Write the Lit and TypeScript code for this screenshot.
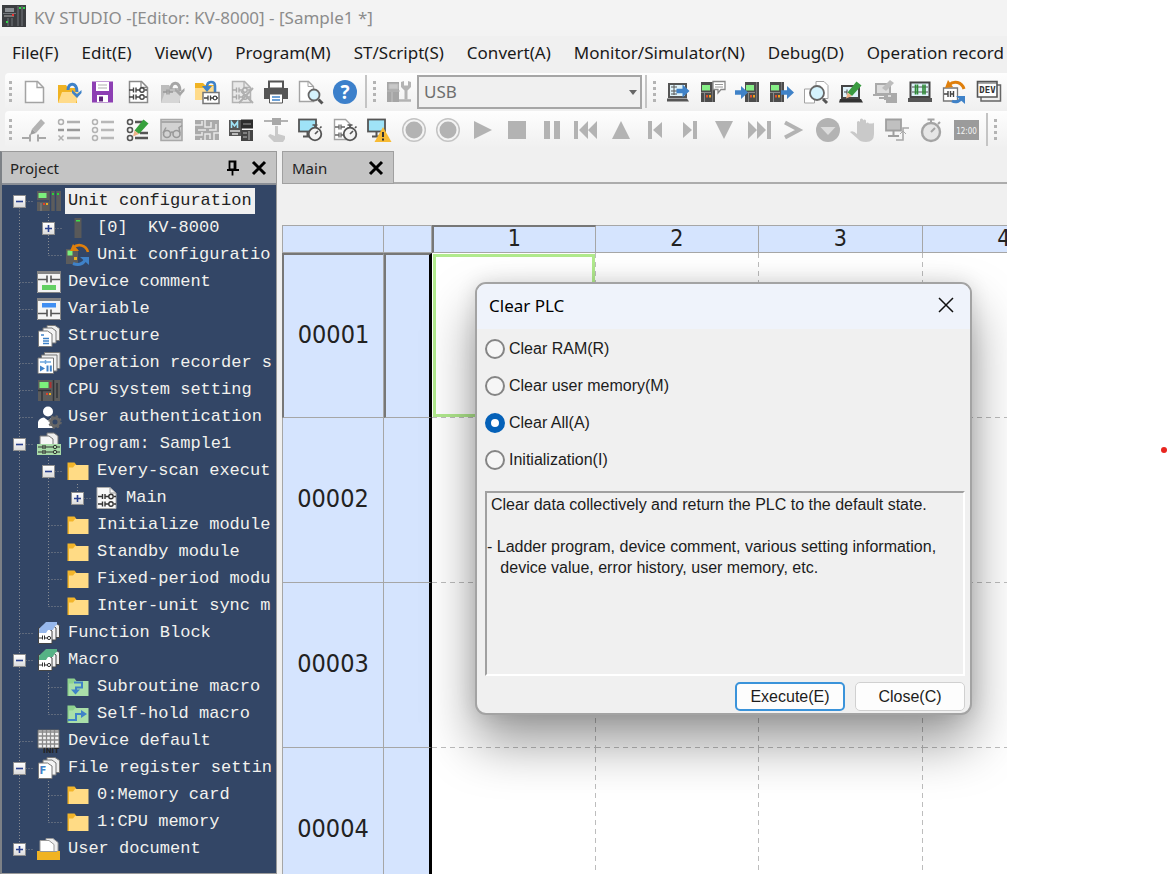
import { LitElement, html, svg, css, nothing } from "lit";
import { customElement, property, state } from "lit/decorators.js";
import { classMap } from "lit/directives/class-map.js";

/* ---------- shared drawing parts ---------- */

const rungs = (x: number, y: number, c: string) => svg`
  <path d="M${x} ${y}h4m3 0h4m5 0h2M${x + 4.5} ${y - 2.5}v5M${x + 7} ${y - 2.5}v5" fill="none" stroke=${c} stroke-width="1.4"/>
  <circle cx=${x + 13} cy=${y} r="2.2" fill="none" stroke=${c} stroke-width="1.4"/>`;
const sheet = (c: string, fill = "#fff") => svg`
  <path d="M3.5 1.5h12l6 6v15h-18z" fill=${fill} stroke=${c} stroke-width="1.5"/>
  <path d="M15 1.5v6h6" fill="none" stroke=${c} stroke-width="1.3"/>`;
const plc = (x: number) => svg`
  <rect x=${x} y="2" width="14" height="20" fill="#4c4c4c"/>
  <rect x=${x + 1} y="5" width="8" height="5.5" fill="#86ee86"/>
  <path d="M${x + 11.5} 2v20" stroke="#777"/>
  <path d="M${x} 12.5h10M${x + 3.5} 13v9" stroke="#8a8a8a"/>
  <path d="M${x + 5} 15h2v2.5h-2z" fill="#e0502a"/>
  <path d="M${x + 8} 15h2v2.5h-2z" fill="#f0a020"/>`;
const arrow = (x: number, y: number) => svg`
  <path d="M${x} ${y - 2.2}h6v-4.3l7 6.5l-7 6.5v-4.3h-6z" fill="#3f82c8"/>`;
const watch = (x: number, y: number) => svg`
  <circle cx=${x} cy=${y} r="6.3" fill="#f4f4f4" stroke="#555" stroke-width="1.8"/>
  <path d="M${x - 2.5} ${y - 9}h5M${x} ${y - 9}v2.5M${x + 5} ${y - 6}l1.5-1.5M${x} ${y}l3-3" fill="none" stroke="#555" stroke-width="1.7"/>`;
const lens = (x: number, y: number, r: number) => svg`
  <circle cx=${x} cy=${y} r=${r} fill="#d5f3fd" stroke="#666" stroke-width="1.8"/>
  <path d="M${x + r - 1} ${y + r - 1}l4 4" stroke="#555" stroke-width="3"/>`;
const monitor = svg`
  <rect x="1" y="1.5" width="17" height="12" fill="#9fe3f7" stroke="#555" stroke-width="1.8"/>
  <path d="M9.500 14v4M5 18.500h9" stroke="#555" stroke-width="2"/>`;
const pencil = (c: string, tip: string) => svg`
  <path d="M8.500 12.500l9-11l5 4l-9.500 10.500z" fill=${c}/>
  <path d="M8.500 12.500l-1.500 6l6-2.500z" fill=${tip}/>`;
const folder = (back: string, front: string) => svg`
  <path d="M1.500 21V3.500h7l2 2.500H22v15z" fill=${back}/>
  <path d="M3 21V8.500h4l2-2.500H22.500v15z" fill=${front}/>`;
const stack = (c = "#777") => svg`
  <path d="M10 1.500h8l4.500 3v12h-12.500z" fill="#eee" stroke=${c}/>
  <path d="M6 4h9l4 3v12h-13z" fill="#f4f4f4" stroke=${c}/>
  <path d="M1.500 7h9l4.500 3v12.500h-13.500z" fill="#fff" stroke=${c}/>`;
const G = "#b3b3b3";

const icons: Record<string, unknown> = {
  app: svg`<rect width="24" height="22" fill="#3b3d40"/><path d="M3 3h9v4H3z" fill="#8b8f93"/><path d="M1 8.500h13M16 1v20M20 1v20M6 13v8M10 13v8" stroke="#74787c"/><path d="M2 10h10v2H2z" fill="#777"/><path d="M10 9h2v2h-2z" fill="#e33"/><path d="M17 2h2v2h-2zM21 2h2v2h-2zM4 16h2v2H4z" fill="#35d64a"/>`,
  doc: sheet("#a3a3a3"),
  open: svg`<path d="M1 23V5h8l2 3h9v15z" fill="#f0b323"/><path d="M1 23l4-11h17l-3 11z" fill="#ffdb8a"/><path d="M11 10c0-8 9-8 9 2" fill="none" stroke="#3f82c8" stroke-width="3"/><path d="M15 10l5 4l4.500-4v3l-4.500 5l-5-5z" fill="#3f82c8"/>`,
  save: svg`<path d="M1 1.500h21v21H1z" fill="#8d3fb3"/><path d="M5 2h13v9H5z" fill="#fff"/><path d="M7 5h9M7 8h9" stroke="#c9c9c9" stroke-width="1.300"/><path d="M6 15h11v7H6z" fill="#fff"/><path d="M8 16.500h4v5H8z" fill="#5d2379"/>`,
  ladder: svg`${sheet("#8a8a8a")}${rungs(3, 10, "#444")}${rungs(3, 17, "#444")}`,
  openGrey: svg`<path d="M1 23V5h8l2 3h9v15z" fill="#bdbdbd"/><path d="M1 23l4-11h17l-3 11z" fill="#d6d6d6"/><path d="M11 9c0-8 9-8 9 2" fill="none" stroke="#a6a6a6" stroke-width="3"/><path d="M15 8l5 4l4.500-4v3l-4.500 5l-5-5z" fill="#a6a6a6"/><path d="M3 12h4m2 0h4M7 9.500v5M9 9.500v5" stroke="#999" stroke-width="1.400"/>`,
  openLadder: svg`<path d="M0 20V3h8l2 2h10v15z" fill="#f0b323"/><path d="M0 20V8h9l2-2h10v14z" fill="#ffdb8a"/><path d="M20 12V6q0-4-4-4q-4 0-4 5" fill="none" stroke="#3f82c8" stroke-width="2.600"/><path d="M7 6h10l-5 6z" fill="#3f82c8"/><path d="M8 12.500h16v11H8z" fill="#fff" stroke="#777" stroke-width="1.500"/><path d="M9 18h4m2 0h3M13 15.500v5M15.500 15.500v5M22 18h1" stroke="#444" stroke-width="1.300"/><circle cx="20" cy="18" r="1.800" fill="none" stroke="#444" stroke-width="1.200"/>`,
  ladderX: svg`${sheet(G, "#e9e9e9")}${rungs(3, 10, "#aaa")}${rungs(3, 17, "#aaa")}<path d="M12 11l12 12M24 8L10 23" stroke="#b0b0b0" stroke-width="2"/>`,
  print: svg`<path d="M5 1.500h14v7H5z" fill="#fff" stroke="#555" stroke-width="2"/><path d="M0 8h24v11H0z" fill="#555"/><path d="M5.500 14h13v9h-13z" fill="#fff" stroke="#555"/><path d="M8 17h8M8 20h8" stroke="#3f82c8" stroke-width="1.600"/>`,
  preview: svg`<path d="M1.500 1.500h9l5 5v15h-14z" fill="#fff" stroke="#a3a3a3" stroke-width="1.400"/><path d="M10 1.500v5h5" fill="none" stroke="#a3a3a3"/>${lens(16, 15, 5.5)}`,
  help: svg`<circle cx="12" cy="12" r="12" fill="#3c80cb"/><text x="12" y="18.500" text-anchor="middle" font-family="Open Sans, sans-serif" font-weight="700" font-size="19" fill="#fff">?</text>`,
  connect: svg`<path d="M0 2h12v20H0z" fill="#a6a6a6"/><path d="M2 4h9v5H2zM0 11h13" fill="#c8c8c8" stroke="#bbb"/><path d="M5 12v10" stroke="#c4c4c4"/><path d="M12 20.500h12" stroke=${G} stroke-width="2.500"/><path d="M14 2v5l3.500 3.500v9h3v-9L24 7V2l-3-1v4.500h-4V1z" fill=${G}/>`,
  pcOut: svg`<path d="M3 4h17v13H3z" fill="#dff3fa" stroke="#555" stroke-width="2"/><path d="M1 18.500h20l2 3H1z" fill="#555"/><path d="M5 7h6M5 11h6M5 14h6M8 5v10" stroke="#555"/>${arrow(10.5, 11)}`,
  plcNote: svg`${plc(0)}<path d="M12 1.500h12v8h-4l-3 3.500v-3.500h-5z" fill="#fff" stroke="#888" stroke-width="1.300"/><path d="M14 4.500h8M14 7h8" stroke="#999"/>`,
  plcIn: svg`${plc(10)}${arrow(0, 12.5)}`,
  plcOut: svg`${plc(0)}${arrow(11, 12.5)}`,
  docFind: svg`<path d="M12 1.500h8l4 4v13H12z" fill="#fff" stroke="#a3a3a3"/><path d="M.500 9h10v14H.500z" fill="#fff" stroke="#a3a3a3"/>${lens(13, 13, 7)}`,
  pcEdit: svg`<path d="M3 6h17v12H3z" fill="#dff3fa" stroke="#444" stroke-width="2"/><path d="M1 19h21l2 3.500H0z" fill="#333"/><path d="M5 12h3M8 9.500v5" stroke="#444"/>${pencil("#3a9b40", "#eeb388")}`,
  pcEditGrey: svg`<path d="M3 4h14v10H3z" fill="#ddd" stroke="#aaa" stroke-width="2"/><path d="M0 15h12v5M6 18h8" fill="none" stroke="#aaa" stroke-width="2"/><path d="M13 13h11v10H13z" fill="#aaa"/><path d="M15 15h3v2h-3z" fill="#ddd"/><path d="M9 8l8-8l4 3l-8 8z" fill="#bdbdbd"/>`,
  pcMonitor: svg`<path d="M2.500 2.500h19v14.500h-19z" fill="#dff3fa" stroke="#444" stroke-width="2"/><path d="M0 18h24v4H0z" fill="#555"/><path d="M4 7h16M4 12h16" stroke="#555"/><path d="M7.500 4.500v5M9.500 4.500v5M15 4.500v5M17 4.500v5M7.500 9.500v5M9.500 9.500v5M15 9.500v5M17 9.500v5" stroke="#2c8a35" stroke-width="1.600"/>`,
  swap: svg`<path d="M1.500 8h14v13h-14z" fill="#fff" stroke="#777" stroke-width="1.300"/><path d="M2 14h4m2.500 0h3M6 11v6M8.500 11v6M11.500 11v6" stroke="#444" stroke-width="1.400"/><path d="M7 5c5-5 13-3 15 4" fill="none" stroke="#df7f0c" stroke-width="3"/><path d="M3 8l3-8l5 7z" fill="#df7f0c"/><path d="M10 21c4 2 9 0 10-4" fill="none" stroke="#3f82c8" stroke-width="3"/><path d="M14 16h9v8z" fill="#3f82c8"/>`,
  dev: svg`<path d="M4 5h19.500v16H4z" fill="#eee" stroke="#666" stroke-width="1.500"/><path d="M.500 1.500H20v15.500H.500z" fill="#fff" stroke="#555" stroke-width="1.600"/><path d="M.500 3H20" stroke="#555"/><text x="10.500" y="13" text-anchor="middle" font-family="DejaVu Sans Mono, monospace" font-weight="700" font-size="9" fill="#333">DEV</text>`,
  edit: svg`<path d="M0 20h8M16 20h8M8 16.500v7M16 16.500v7" stroke="#a8a8a8" stroke-width="2"/><path d="M10 11l9-10l4 4l-9 10z" fill=${G}/><path d="M10 11l-2 6l6-2z" fill="#9d9d9d"/>`,
  listX: svg`<path d="M10 4h13M10 20h13" stroke="#b0b0b0" stroke-width="2.600"/><path d="M1 12h6M10 12h13" stroke="#999" stroke-width="2.600"/><circle cx="4" cy="4" r="2.500" fill="none" stroke="#b0b0b0" stroke-width="1.500"/><path d="M1.500 17.500l5 5M6.500 17.500l-5 5" stroke="#b0b0b0" stroke-width="1.500"/>`,
  list: svg`<path d="M10 4h13M10 12h13M10 20h13" stroke="#b8b8b8" stroke-width="2.400"/><circle cx="4" cy="4" r="2.500" fill="none" stroke=${G} stroke-width="1.500"/><circle cx="4" cy="12" r="2.500" fill="none" stroke=${G} stroke-width="1.500"/><circle cx="4" cy="20" r="2.500" fill="none" stroke=${G} stroke-width="1.500"/>`,
  listEdit: svg`<path d="M9 4h8M14 15h8M9 20h13" stroke="#555" stroke-width="2.400"/><circle cx="4" cy="4" r="2.500" fill="none" stroke="#555" stroke-width="1.600"/><circle cx="4" cy="12" r="2.500" fill="none" stroke="#555" stroke-width="1.600"/><circle cx="4" cy="20" r="2.500" fill="none" stroke="#555" stroke-width="1.600"/>${pencil("#36a03c", "#eeb388")}`,
  glasses: svg`<path d="M1 1.500h21v21H1z" fill="#d2d2d2" stroke="#a8a8a8" stroke-width="1.600"/><path d="M1 4h21" stroke="#a8a8a8" stroke-width="2"/><path d="M3 15L6 9.500M20 15l-1-5.500l3-2M10.500 15q1.500-2 3 0" fill="none" stroke="#999" stroke-width="1.500"/><circle cx="7" cy="16" r="3.500" fill="none" stroke="#999" stroke-width="1.600"/><circle cx="16.500" cy="16" r="3.500" fill="none" stroke="#999" stroke-width="1.600"/>`,
  blocks: svg`<path d="M0 2h24v20H0z" fill="#aaa"/><path d="M0 7h7V3M10 2v7h6V4M3 12h8M14 12h7V6M0 17h7v-3M10 22v-6h5v5M19 22v-7h5M6 22v-2" fill="none" stroke="#e8e8e8" stroke-width="1.500"/>`,
  memory: svg`<path d="M0 2h13v16H0z" fill="#555"/><path d="M2.500 10V4l3 4l3-4v6" fill="none" stroke="#9fe3f7" stroke-width="1.600"/><path d="M1 13h10M3 16h6" stroke="#ddd" stroke-width="1.300"/><path d="M12 1.500h12v9H12z" fill="#2c2c2c"/><path d="M14 6h8" stroke="#999"/><path d="M12 12h12v11H12z" fill="#444"/><path d="M14 15h4M20 13v9M14 19h4" stroke="#bbb"/>`,
  touch: svg`<path d="M0 3h24" stroke=${G} stroke-width="2"/><path d="M8 0h9v7H8z" fill="#a8a8a8"/><path d="M11 8h3v8l7 2v3l-2 3h-9l-6-6l2-2l5 2z" fill="#c9c9c9"/>`,
  pcWatch: svg`${monitor}${watch(17, 16)}`,
  ladderWatch: svg`<path d="M1.500 1.500h11l5 5v15h-16z" fill="#fff" stroke="#a3a3a3" stroke-width="1.400"/><path d="M2 9h4m2 0h4M6 6.500v5M8 6.500v5M2 17h4m2 0h4M6 14.500v5M8 14.500v5" stroke="#666" stroke-width="1.300"/>${watch(17, 16)}`,
  pcWarn: svg`${monitor}<path d="M16 9l8.500 15H7.500z" fill="#f8bb33"/><path d="M16 14v5M16 20.500v2" stroke="#333" stroke-width="2"/>`,
  rec: svg`<circle cx="12" cy="12" r="11.300" fill="#f4f4f4" stroke="#c4c4c4" stroke-width="1.500"/><circle cx="12" cy="12" r="8.500" fill=${G}/>`,
  play: svg`<path d="M3 3l18 9l-18 9z" fill=${G}/>`,
  stop: svg`<path d="M3 3h18v18H3z" fill=${G}/>`,
  pause: svg`<path d="M4 3h6v18H4zM14 3h6v18h-6z" fill=${G}/>`,
  first: svg`<path d="M0 3h4v18H0zM14 3v18L5 12zM23 3v18l-9-9z" fill=${G}/>`,
  up: svg`<path d="M12 3l9 18H3z" fill=${G}/>`,
  prev: svg`<path d="M5 3h4v18H5zM19 4v16l-9-8z" fill=${G}/>`,
  next: svg`<path d="M15 3h4v18h-4zM5 4v16l9-8z" fill=${G}/>`,
  down: svg`<path d="M12 21l9-18H3z" fill=${G}/>`,
  last: svg`<path d="M20 3h4v18h-4zM1 3v18l9-9zM10 3v18l9-9z" fill=${G}/>`,
  step: svg`<path d="M4 4.500L18 12L4 19.500" fill="none" stroke=${G} stroke-width="4"/>`,
  drop: svg`<circle cx="12" cy="12" r="12" fill=${G}/><path d="M4.500 9h15L12 17z" fill="#dcdcdc"/>`,
  hand: svg`<path d="M0 14q3-2 7 2V4q1.500-2 3 0v8V1.500q1.500-2 3 0V12V2.500q1.500-2 3 0V12.500V5.500q1.500-2 3 0h3.500q1.500-2 1.500 1V16q0 8-8 8q-6 0-8-3z" fill="#c9c9c9"/>`,
  pcLink: svg`<path d="M1 1.500h15v11H1z" fill="#c0c0c0" stroke="#9f9f9f" stroke-width="1.800"/><path d="M8.500 13v4M3 18h11" stroke="#9f9f9f" stroke-width="2"/><path d="M11 22h7V10h6" fill="none" stroke="#a8a8a8" stroke-width="1.600"/><path d="M15 16l3-3l3 3" fill="none" stroke="#a8a8a8"/>`,
  timer: svg`<circle cx="12" cy="14" r="9" fill="#e6e6e6" stroke="#a4a4a4" stroke-width="2.400"/><path d="M8.500 1.500h7M12 1v4M19 6l2-2M12 14l4-4" stroke="#a4a4a4" stroke-width="2"/>`,
  clock: svg`<path d="M0 2h25v20H0z" fill="#9b9b9b"/><text x="12.500" y="16" text-anchor="middle" font-family="DejaVu Sans Condensed, DejaVu Sans, sans-serif" font-size="8" fill="#f4f4f4">12:00</text>`,

  unit: svg`<path d="M0 2h24v20H0z" fill="#5c5c5c"/><path d="M1.500 4h8v5h-8z" fill="#7cf07c"/><path d="M13.500 2v20M18.500 2v20M0 12h12" stroke="#334666" stroke-width="1.500"/><path d="M15 4h2v2h-2zM20 4h2v2h-2z" fill="#27d43a"/><path d="M6 14h2v2H6z" fill="#e0402a"/><path d="M9 14h2v2H9z" fill="#e8b020"/><path d="M4 14v8" stroke="#888"/>`,
  module: svg`<path d="M8.500 2h7v20h-7z" fill="#595959"/><path d="M10 4h4v1.500h-4z" fill="#3de24b"/>`,
  unitSwap: svg`<path d="M0 6h12v15H0z" fill="#5c5c5c"/><path d="M1.500 7.500h5v5h-5z" fill="#7cf07c"/><path d="M8 14h3v3H8z" fill="#e8b020"/><path d="M7 5c5-5 13-3 15 4" fill="none" stroke="#df7f0c" stroke-width="2.600"/><path d="M4 8l3-7l6 7z" fill="#df7f0c"/><path d="M7 20.500c5 2 9 1 12-3" fill="none" stroke="#3f82c8" stroke-width="3"/><path d="M14 14h9v8z" fill="#3f82c8"/>`,
  devComment: svg`<path d="M0 1h24v22H0z" fill="#f4f4f4"/><path d="M0 1h24v3H0z" fill="#858585"/><path d="M.500 1v21.500h23V1" fill="none" stroke="#858585"/><path d="M1 9.500h9M14 9.500h9M10 5.500v7M14 5.500v7" stroke="#555" stroke-width="1.600"/><path d="M5 15h14v5H5z" fill="#63d063"/>`,
  variable: svg`<path d="M0 1h24v22H0z" fill="#f4f4f4"/><path d="M0 1h24v3H0z" fill="#858585"/><path d="M.500 1v21.500h23V1" fill="none" stroke="#858585"/><path d="M1 16.500h9M14 16.500h9M10 12.500v7M14 12.500v7" stroke="#555" stroke-width="1.600"/><path d="M5 6h14v4.500H5z" fill="#3f8ef2"/>`,
  structure: svg`${stack()}<path d="M4 11h3" stroke="#3f82c8" stroke-width="1.500"/><path d="M6 14.500h6M6 17h6M6 19.500h6" stroke="#3f82c8" stroke-width="1.300"/>`,
  recorder: svg`<path d="M7.500 1.500h15.500v16H7.500z" fill="#e8e8e8" stroke="#777"/><path d="M4.500 4h15.500v16H4.500z" fill="#f0f0f0" stroke="#777"/><path d="M1 7h15.500v15.500H1z" fill="#fff" stroke="#777"/><path d="M3 11h11M8.500 9v4" stroke="#6da6dd" stroke-width="1.500"/><path d="M3 14.500l5 3l-5 3zM9.500 14.500h2v6h-2zM12.800 14.500h2v6h-2z" fill="#3f82c8"/>`,
  cpu: svg`<path d="M1 2h22v21H1z" fill="#5c5c5c"/><path d="M2.500 4h9v6h-9z" fill="#7cf07c"/><path d="M12.500 4h2v6h-2z" fill="#a33"/><path d="M16.500 2v21M20 5v15M1 12.500h13M5 13v10" stroke="#2f3338" stroke-width="1.500"/><path d="M9 15h2v2H9z" fill="#e0402a"/><path d="M12 15h2v2h-2z" fill="#e8b020"/>`,
  user: svg`<circle cx="11" cy="6.500" r="5" fill="#fff"/><path d="M1 23v-6q1-4 6-4.500l4 3l4-3l2 1v9.500z" fill="#fff"/><circle cx="18" cy="17" r="4" fill="#334666" stroke="#666" stroke-width="3"/><circle cx="18" cy="17" r="6" fill="none" stroke="#666" stroke-width="1.500" stroke-dasharray="2.400 2.300"/>`,
  program: svg`<path d="M10 1h7l4 3v10H10z" fill="#eee" stroke="#777"/><path d="M3 4h9l4 3v8H3z" fill="#f6f6f6" stroke="#777"/><path d="M0 12h24v11H0z" fill="#a8dba8"/><path d="M1 15h5m2 0h8M20 15h3M6 13v4M8 13v4M1 20h5m2 0h8M20 20h3M6 18v4M8 18v4" stroke="#333" stroke-width="1.200"/><circle cx="18" cy="15" r="1.700" fill="none" stroke="#333"/><circle cx="18" cy="20" r="1.700" fill="none" stroke="#333"/>`,
  folder: folder("#f3b52a", "#ffdb85"),
  main: svg`<path d="M2 1.500h13l6 5.500v15.500H2z" fill="#f8f8f8" stroke="#aaa"/><path d="M15 1.500v5.500h6" fill="none" stroke="#999"/>${rungs(3, 10.5, "#333")}${rungs(3, 18, "#333")}`,
  funcBlock: svg`${stack("#444")}<path d="M2 9q0-2 5-6l2-2h11v3q-2 0-4 5H11l-2 3H2z" fill="#97b8ec"/><path d="M2 17h3m2 0h3M5.500 14.500v4M7.500 14.500v4" stroke="#333"/><circle cx="12" cy="17" r="1.600" fill="none" stroke="#333"/>`,
  macro: svg`${stack("#444")}<path d="M2 9q0-2 5-6l2-2h11v3q-2 0-4 5H11l-2 3H2z" fill="#56b285"/><path d="M2 17h3m2 0h3M5.500 14.500v4M7.500 14.500v4" stroke="#333"/><circle cx="12" cy="17" r="1.600" fill="none" stroke="#333"/>`,
  subroutine: svg`${folder("#8fd28f", "#a9dfa9")}<path d="M8 7.500h8v5h-6v5" fill="none" stroke="#3f82c8" stroke-width="2"/><path d="M5 14.500h9l-4.500 5z" fill="#3f82c8"/>`,
  selfHold: svg`${folder("#8fd28f", "#a9dfa9")}<path d="M2 18h8v-6h6" fill="none" stroke="#3f82c8" stroke-width="2"/><path d="M15 8l6 4l-6 4z" fill="#3f82c8"/>`,
  devDefault: svg`<path d="M1 1h21v18H1z" fill="#f2f2f2" stroke="#666"/><path d="M1 3h21M1 7h21M1 11h21M1 15h21M5.500 1v18M9.500 1v18M13.500 1v18M17.500 1v18" stroke="#8a8a8a" stroke-width="1.300"/><text x="14" y="23.500" text-anchor="middle" font-family="DejaVu Sans, sans-serif" font-weight="700" font-size="7" fill="#222">INIT</text>`,
  fileReg: svg`${stack()}<text x="6" y="17.500" text-anchor="middle" font-family="DejaVu Sans, sans-serif" font-weight="700" font-size="10" fill="#3f82c8">F</text>`,
  userDoc: svg`<path d="M9 1.500h7l5 4v9H9z" fill="#eee" stroke="#999"/><path d="M3 3.500h9l5 4v7H3z" fill="#fff" stroke="#999"/><path d="M0 14h3v1h17v-1h3v9H0z" fill="#f0b323"/>`,
};

@customElement("kv-icon")
class KvIcon extends LitElement {
  @property() name = "";
  static styles = css`
    :host { display: block; width: 24px; height: 24px; flex: none; }
    .glyph { display: block; width: 24px; height: 24px; overflow: visible; }
  `;
  render() {
    return html`<svg class="glyph" viewBox="0 0 24 24" aria-hidden="true">${icons[this.name] ?? nothing}</svg>`;
  }
}

/* ---------- project tree ---------- */

type Row = { guides: string; icon: string; label: string; open?: boolean; selected?: boolean };
/* One letter for each guide column: i = straight line, t = branch, e = last branch, s = first branch. */
const rows: Row[] = [
  { guides: "s", icon: "unit", label: "Unit configuration", open: true, selected: true },
  { guides: "it", icon: "module", label: "[0]  KV-8000", open: false },
  { guides: "ie", icon: "unitSwap", label: "Unit configuratio" },
  { guides: "t", icon: "devComment", label: "Device comment" },
  { guides: "t", icon: "variable", label: "Variable" },
  { guides: "t", icon: "structure", label: "Structure" },
  { guides: "t", icon: "recorder", label: "Operation recorder s" },
  { guides: "t", icon: "cpu", label: "CPU system setting" },
  { guides: "t", icon: "user", label: "User authentication" },
  { guides: "t", icon: "program", label: "Program: Sample1", open: true },
  { guides: "it", icon: "folder", label: "Every-scan execut", open: true },
  { guides: "iie", icon: "main", label: "Main", open: false },
  { guides: "it", icon: "folder", label: "Initialize module" },
  { guides: "it", icon: "folder", label: "Standby module" },
  { guides: "it", icon: "folder", label: "Fixed-period modu" },
  { guides: "ie", icon: "folder", label: "Inter-unit sync m" },
  { guides: "t", icon: "funcBlock", label: "Function Block" },
  { guides: "t", icon: "macro", label: "Macro", open: true },
  { guides: "it", icon: "subroutine", label: "Subroutine macro" },
  { guides: "ie", icon: "selfHold", label: "Self-hold macro" },
  { guides: "t", icon: "devDefault", label: "Device default" },
  { guides: "t", icon: "fileReg", label: "File register settin", open: true },
  { guides: "it", icon: "folder", label: "0:Memory card" },
  { guides: "ie", icon: "folder", label: "1:CPU memory" },
  { guides: "e", icon: "userDoc", label: "User document", open: false },
];
const guidePaths: Record<string, string> = {
  i: "M14.5 0v27",
  t: "M14.5 0v27M14.5 14.5h15",
  e: "M14.5 0v14.5M14.5 14.5h15",
  s: "M14.5 14.5v13M14.5 14.5h15",
};

@customElement("kv-project")
class KvProject extends LitElement {
  static styles = css`
    :host { display: flex; flex-direction: column; min-height: 0; border: 1px solid #9a9a9a; border-left: 2px solid #7d8186; box-sizing: border-box; overflow: hidden; background: #334666; }
    .head { display: flex; align-items: center; height: 33px; flex: none; box-sizing: border-box; padding: 0 8px; background: #c4c4c4; border-bottom: 2px solid #8b8f96; font: 15px "Noto Sans", sans-serif; color: #222; }
    .title { margin: 0; font: inherit; flex: 1; }
    .tool { border: 0; background: none; padding: 0; width: 18px; height: 18px; margin-left: 8px; }
    .tree { list-style: none; margin: 0; padding: 2px 0 0 3px; }
    .row { display: flex; height: 27px; align-items: center; }
    .cell { display: grid; width: 29px; height: 27px; flex: none; place-items: center; }
    .cell > * { grid-area: 1 / 1; }
    .guide { width: 29px; height: 27px; fill: none; stroke: #8a8d93; stroke-width: 1; stroke-dasharray: 1 2; }
    .box { width: 13px; height: 13px; padding: 0; margin-top: 2px; border: 1px solid #8f8f8f; background: linear-gradient(#fff, #dcdcdc); display: grid; place-items: center; }
    .label { white-space: pre; margin-left: 2px; padding: 0 3px; height: 26px; line-height: 26px; color: #f2f2ee; font-family: "Liberation Mono", "Courier New", monospace; font-size: 17px; }
    .selected { background: #f0f0f0; color: #222; }
  `;
  render() {
    return html`
      <header class="head">
        <h2 class="title">Project</h2>
        <button class="tool" aria-label="Auto hide"><svg width="18" height="18" viewBox="0 0 18 18"><path d="M5.500 2.500h6v8h-6zM10.500 2.500v8M3 11h12M8.500 11v5.500" fill="none" stroke="#000" stroke-width="1.800"/></svg></button>
        <button class="tool" aria-label="Close panel"><svg width="18" height="18" viewBox="0 0 18 18"><path d="M3 3l12 12M15 3L3 15" stroke="#000" stroke-width="3"/></svg></button>
      </header>
      <ul class="tree">
        ${rows.map((r) => html`<li class="row">
          ${[...r.guides].map((g, i) => html`<span class="cell">
            <svg class="guide" viewBox="0 0 29 27" aria-hidden="true"><path d=${guidePaths[g]}/></svg>
            ${i === r.guides.length - 1 && r.open !== undefined
              ? html`<button class="box" aria-label=${r.open ? "Collapse" : "Expand"}><svg width="11" height="11" viewBox="0 0 11 11"><path d=${r.open ? "M2 5.5h7" : "M2 5.5h7M5.5 2v7"} stroke="#2b4290" stroke-width="1.6"/></svg></button>`
              : nothing}
          </span>`)}
          <span class="cell"><kv-icon name=${r.icon}></kv-icon></span>
          <span class=${classMap({ label: true, selected: !!r.selected })}>${r.label}</span>
        </li>`)}
      </ul>`;
  }
}

/* ---------- ladder editor ---------- */

@customElement("kv-ladder")
class KvLadder extends LitElement {
  static styles = css`
    :host { display: flex; flex-direction: column; min-width: 0; min-height: 0; overflow: hidden; }
    .tabs { display: flex; height: 33px; flex: none; }
    .tab { width: 112px; box-sizing: border-box; border: 1px solid #a0a0a0; background: #c4c4c4; display: flex; align-items: center; justify-content: space-between; padding: 0 8px 0 9px; font: 15px "Noto Sans", sans-serif; color: #222; }
    .close { border: 0; padding: 0; background: none; width: 18px; height: 18px; }
    .rest { flex: 1; border-bottom: 2px solid #acacac; }
    .canvas { margin-top: 41px; flex: 1; min-height: 0; overflow: hidden; background: #fff; }
    .grid { table-layout: fixed; border-collapse: separate; border-spacing: 0; width: 804px; font-family: "DejaVu Sans Condensed", "DejaVu Sans", sans-serif; color: #222; }
    .c-no { width: 102px; } .c-rail { width: 48px; }
    .grid th { box-sizing: border-box; padding: 0 0 4px; font-weight: 400; background: #d5e4fe; border: 0 solid #a6a6a6; border-width: 0 1px 1px 0; }
    .grid thead th { height: 28px; padding: 0 0 3px; border-top-width: 1px; font-size: 23px; line-height: 22px; }
    .grid th:first-child { border-left-width: 1px; }
    .grid thead th.current { border-top: 2px solid #777; border-left: 2px solid #777; }
    .grid tbody th { height: 165px; font-size: 25px; }
    .grid tbody th.rail { border-right: 3px solid #000; }
    .grid tbody th.current { border-top: 2px solid #777; border-left: 2px solid #777; }
    .slot { padding: 0; background:
      repeating-linear-gradient(90deg, #bdbdbd 0 5px, transparent 5px 9px) bottom / 100% 1px no-repeat,
      repeating-linear-gradient(#bdbdbd 0 5px, transparent 5px 9px) right / 1px 100% no-repeat; }
    .active { outline: 3px solid #b1ea8d; outline-offset: -4px; }
  `;
  render() {
    const cols = [1, 2, 3, 4];
    return html`
      <div class="tabs">
        <div class="tab"><span>Main</span><button class="close" aria-label="Close Main"><svg width="18" height="18" viewBox="0 0 18 18"><path d="M3 3l12 12M15 3L3 15" stroke="#000" stroke-width="3"/></svg></button></div>
        <div class="rest"></div>
      </div>
      <div class="canvas">
        <table class="grid">
          <colgroup><col class="c-no"><col class="c-rail">${cols.map(() => html`<col>`)}</colgroup>
          <thead><tr><th></th><th></th>${cols.map((c) => html`<th scope="col" class=${c === 1 ? "current" : ""}>${c}</th>`)}</tr></thead>
          <tbody>
            ${[1, 2, 3, 4].map((r) => html`<tr>
              <th scope="row" class=${r === 1 ? "current" : ""}>${String(r).padStart(5, "0")}</th>
              <th class=${classMap({ rail: true, current: r === 1 })}></th>
              ${cols.map((c) => html`<td class=${classMap({ slot: true, active: r === 1 && c === 1 })}></td>`)}
            </tr>`)}
          </tbody>
        </table>
      </div>`;
  }
}

/* ---------- clear dialog ---------- */

@customElement("kv-clear-dialog")
class KvClearDialog extends LitElement {
  @state() private choice = "A";
  static styles = css`
    :host { display: block; box-sizing: border-box; border: 2px solid #a3a3a3; border-radius: 11px; overflow: hidden; background: #f0f0f0; color: #1c1c1c; font: 16px "Liberation Sans", Arial, sans-serif; box-shadow: 0 28px 52px rgba(0, 0, 0, .4), 0 0 20px rgba(0, 0, 0, .12); }
    .bar { display: flex; align-items: center; justify-content: space-between; height: 45px; box-sizing: border-box; padding: 0 15px 3px 12px; background: #eff3fb; color: #000; }
    .title { margin: 0; font: 17px "Noto Sans", sans-serif; }
    .x { width: 18px; height: 18px; border: 0; padding: 0; background: none; }
    .choices { border: 0; margin: 0; padding: 1px 8px 0; }
    .choice { display: flex; align-items: center; gap: 4px; height: 37px; }
    .radio { appearance: none; width: 20px; height: 20px; margin: 0; box-sizing: border-box; border: 2px solid #858585; border-radius: 50%; background: #f6f6f6; }
    .radio:checked { border: 6px solid #0561b8; background: #fff; }
    .note { margin: 13px 5px 0 8px; height: 185px; box-sizing: border-box; border: 2px solid #fff; border-top-color: #a0a0a0; border-left-color: #a0a0a0; line-height: 21px; padding-top: 1px; }
    .line { margin: 0; padding-left: 4px; min-height: 21px; white-space: pre; }
    .item { padding-left: 0; }
    .actions { display: flex; justify-content: flex-end; gap: 10px; padding: 6px 5px 2px; }
    .btn { width: 110px; height: 29px; box-sizing: border-box; border: 1px solid #d0d0d0; border-radius: 5px; background: #fdfdfd; padding: 0; font: inherit; color: inherit; }
    .default { border: 2px solid #3a93da; }
  `;
  render() {
    const opts = [["R", "Clear RAM(R)"], ["M", "Clear user memory(M)"], ["A", "Clear All(A)"], ["I", "Initialization(I)"]];
    return html`
      <header class="bar">
        <h1 class="title">Clear PLC</h1>
        <button class="x" aria-label="Close"><svg width="18" height="18" viewBox="0 0 18 18"><path d="M2 2l14 14M16 2L2 16" stroke="#111" stroke-width="1.500"/></svg></button>
      </header>
      <fieldset class="choices" aria-label="Clear PLC">
        ${opts.map(([v, t]) => html`<label class="choice"><input class="radio" type="radio" name="clear" .value=${v} ?checked=${this.choice === v} @change=${() => (this.choice = v)}><span>${t}</span></label>`)}
      </fieldset>
      <div class="note">
        <p class="line">Clear data collectively and return the PLC to the default state.</p>
        <p class="line"></p>
        <p class="line item">- Ladder program, device comment, various setting information,</p>
        <p class="line item">   device value, error history, user memory, etc.</p>
      </div>
      <footer class="actions"><button class="btn default">Execute(E)</button><button class="btn">Close(C)</button></footer>`;
  }
}

/* ---------- application ---------- */

const menus = ["File(F)", "Edit(E)", "View(V)", "Program(M)", "ST/Script(S)", "Convert(A)", "Monitor/Simulator(N)", "Debug(D)", "Operation record"];
const fileTools = ["doc", "open", "save", "ladder", "openGrey", "openLadder", "ladderX", "print", "preview", "help"];
const plcTools = ["pcOut", "plcNote", "plcIn", "plcOut", "docFind", "pcEdit", "pcEditGrey", "pcMonitor", "swap", "dev"];
const runTools = ["edit", "listX", "list", "listEdit", "glasses", "blocks", "memory", "touch", "pcWatch", "ladderWatch", "pcWarn", "rec", "rec", "play", "stop", "pause", "first", "up", "prev", "next", "down", "last", "step", "drop", "hand", "pcLink", "timer", "clock"];

@customElement("app-root")
class AppRoot extends LitElement {
  static styles = css`
    :host { display: grid; grid-template-columns: minmax(0, 1fr) 161px; height: 100vh; background: #fff; overflow: hidden; }
    .window { position: relative; display: flex; flex-direction: column; min-width: 0; min-height: 0; overflow: hidden; background: #f0f0f0; }
    .titlebar { display: flex; align-items: center; gap: 8px; height: 36px; box-sizing: border-box; flex: none; padding: 0 0 2px 2px; background: #f3f3f3; color: #8c8c8c; font: 17px "Noto Sans", sans-serif; }
    .menu { display: flex; align-items: center; gap: 23px; height: 37px; box-sizing: border-box; flex: none; padding: 0 0 4px 12px; font: 17px "Noto Sans", sans-serif; white-space: nowrap; overflow: hidden; }
    .menu-item { border: 0; background: none; padding: 0; font: inherit; color: #1a1a1a; flex: none; }
    .bar { display: flex; align-items: center; height: 37px; flex: none; margin-left: 5px; background: linear-gradient(#fefefe, #f0f0f0); border-radius: 4px 0 0 4px; margin-bottom: 1px; }
    .grip { width: 3px; height: 22px; flex: none; margin: 0 5px 0 4px; background: repeating-linear-gradient(#b4b4b4 0 3px, transparent 3px 6px); }
    .tools { display: grid; grid-auto-flow: column; grid-auto-columns: 1fr; flex: none; justify-items: center; }
    .ten { width: 345px; } .run { width: 966px; } .one { width: 36px; }
    .tool { border: 0; background: none; padding: 0; }
    .sep { width: 2px; height: 33px; background: #c4c4c4; flex: none; margin: 0 2px 0 3px; }
    .pick { position: relative; width: 225px; height: 34px; flex: none; }
    .select { appearance: none; width: 100%; height: 100%; box-sizing: border-box; border: 2px solid #a6a6a6; border-radius: 0; background: #f0f0f0; color: #6e6e6e; opacity: 1; padding: 0 5px; font: 17px "Noto Sans", sans-serif; }
    .caret { position: absolute; right: 5px; top: 15px; border: 4px solid transparent; border-top: 5px solid #666; border-bottom: 0; }
    .work { display: grid; grid-template-columns: 277px minmax(0, 1fr); gap: 5px; flex: 1; min-height: 0; margin-top: 2px; }
    .dialog { position: absolute; left: 475px; top: 282px; width: 497px; }
    .side { display: flex; justify-content: flex-end; padding: 447px 1px 0 0; }
    .dot { width: 6px; height: 6px; border-radius: 50%; background: #e8251f; }
  `;
  private group(names: string[], cls: string) {
    return html`<div class="tools ${cls}">${names.map((n) => html`<button class="tool" aria-label=${n}><kv-icon name=${n}></kv-icon></button>`)}</div>`;
  }
  render() {
    return html`
      <main class="window">
        <header class="titlebar"><kv-icon name="app"></kv-icon><span>KV STUDIO -[Editor: KV-8000] - [Sample1 *]</span></header>
        <nav class="menu">${menus.map((m) => html`<button class="menu-item">${m}</button>`)}</nav>
        <div class="bar">
          <span class="grip"></span>${this.group(fileTools, "ten")}
          <span class="sep"></span><span class="grip"></span>${this.group(["connect"], "one")}
          <div class="pick"><select class="select" aria-label="Connection"><option>USB</option></select><span class="caret"></span></div>
          <span class="sep"></span><span class="grip"></span>${this.group(plcTools, "ten")}
        </div>
        <div class="bar">
          <span class="grip"></span>${this.group(runTools, "run")}
          <span class="sep"></span><span class="grip"></span>
        </div>
        <div class="work"><kv-project></kv-project><kv-ladder></kv-ladder></div>
        <kv-clear-dialog class="dialog" role="dialog" aria-label="Clear PLC"></kv-clear-dialog>
      </main>
      <aside class="side"><span class="dot"></span></aside>`;
  }
}
